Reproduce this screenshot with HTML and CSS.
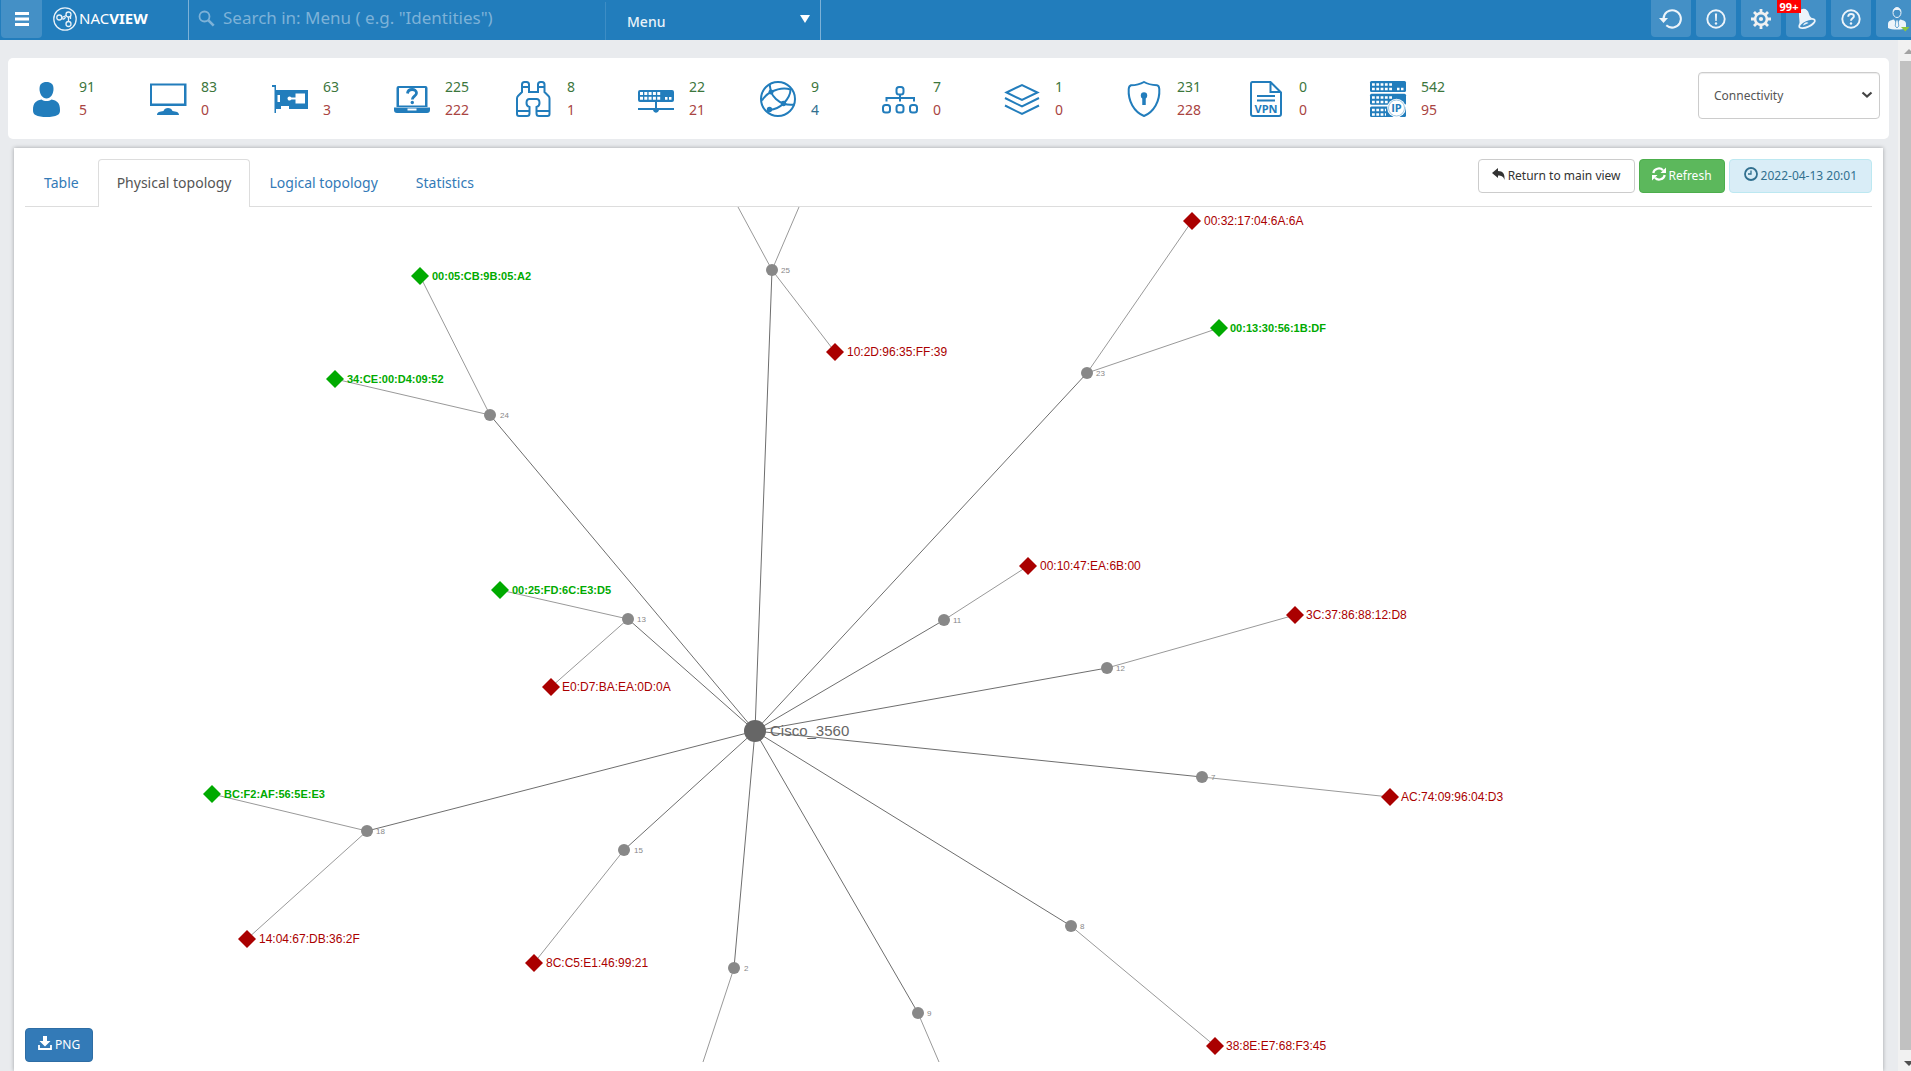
FILE: index.html
```html
<!DOCTYPE html>
<html lang="en">
<head>
<meta charset="utf-8">
<meta name="viewport" content="width=device-width, initial-scale=1">
<title>NACVIEW - Physical topology</title>
<link rel="stylesheet" href="styles.css">
</head>
<body>
<header class="topbar">
  <button class="bar-btn menu-btn" type="button" aria-label="Toggle menu">
    <svg width="14" height="14" viewBox="0 0 14 14"><path d="M0 0h14v3H0zM0 5.500h14v3H0zM0 11h14v3H0z" fill="#fff"/></svg>
  </button>
  <a class="brand" href="#" aria-label="NACVIEW">
    <svg width="24" height="24" viewBox="0 0 24 24" fill="none" stroke="#e8f1f8" stroke-width="1.300"><circle cx="12" cy="12" r="11.200"/><circle cx="6.300" cy="10.500" r="2.500"/><circle cx="15.500" cy="7.500" r="2.500"/><circle cx="15.500" cy="17" r="2.500"/><path d="M8.800 10.500l4.500-2M15.500 10v4.500M9 11.500c1.500 1 2.500.500 3.500-1.500M17.500 9v3"/></svg>
    <span class="brand-name">NAC<b>VIEW</b></span>
  </a>
  <div class="search">
    <label class="search-icon" for="search"><svg width="17" height="17" viewBox="0 0 17 17" fill="none" stroke="#7db2d8"><circle cx="6.500" cy="6.500" r="5" stroke-width="1.800"/><path d="M10.200 10.200l5.500 5.500" stroke-width="2.600"/></svg></label>
    <input id="search" class="search-input" type="text" placeholder='Search in: Menu ( e.g. "Identities")'>
    <div class="scope">
      <select class="scope-select" aria-label="Search scope"><option>Menu</option></select>
      <svg class="scope-arrow" width="10" height="8" viewBox="0 0 10 8"><path d="M0 0h10L5 8z" fill="#fff"/></svg>
    </div>
  </div>
  <nav class="bar-actions">
    <button class="bar-btn" type="button" aria-label="Reload">
      <svg width="24" height="24" viewBox="0 0 24 24"><path d="M4.500 12a8.700 8.700 0 1 1 2.800 6.300" fill="none" stroke="#edf4fa" stroke-width="2"/><path d="M0 11h9l-4.500 5z" fill="#edf4fa"/></svg>
    </button>
    <button class="bar-btn" type="button" aria-label="Alerts">
      <svg width="24" height="24" viewBox="0 0 24 24"><circle cx="12" cy="12" r="8.700" fill="none" stroke="#edf4fa" stroke-width="1.900"/><path d="M10.900 6.500h2.200l-.400 7.500h-1.400z" fill="#edf4fa"/><circle cx="12" cy="16.500" r="1.200" fill="#edf4fa"/></svg>
    </button>
    <button class="bar-btn" type="button" aria-label="Settings">
      <svg width="24" height="24" viewBox="0 0 24 24" fill="none" stroke="#f1f1f1"><circle cx="12" cy="12" r="5.900" stroke-width="2.600"/><circle cx="12" cy="12" r="2.100" fill="#f1f1f1" stroke="none"/><path d="M12 2v4M12 18v4M2 12h4M18 12h4M5 5l2.500 2.500M16.500 16.500L19 19M5 19l2.500-2.500M16.500 7.500L19 5" stroke-width="2.800"/></svg>
    </button>
    <button class="bar-btn" type="button" aria-label="Notifications">
      <svg width="24" height="24" viewBox="0 0 24 24"><path d="M5.500 4C9 0 14 2 15 7c.700 3 3 4.500 6 5.500L5 19.500C6.500 15 4 9 5.500 4z" fill="#edf4fa"/><ellipse cx="13" cy="16.500" rx="8.500" ry="3.400" transform="rotate(-24 13 16.500)" fill="#4490c6" stroke="#edf4fa" stroke-width="1.800"/><path d="M9 18.500c1-3 4-4 5.500-2.500z" fill="#edf4fa"/></svg>
      <span class="badge">99+</span>
    </button>
    <button class="bar-btn" type="button" aria-label="Help">
      <svg width="24" height="24" viewBox="0 0 24 24" fill="none" stroke="#edf4fa"><circle cx="12" cy="12" r="8.700" stroke-width="1.900"/><path d="M9.200 9.800c0-4 5.700-3.500 5.700-.500 0 2-2.900 2.100-2.900 4.500" stroke-width="1.900"/><circle cx="12" cy="16.500" r="1.200" fill="#edf4fa" stroke="none"/></svg>
    </button>
    <button class="bar-btn" type="button" aria-label="Account">
      <svg width="26" height="26" viewBox="0 0 26 26"><ellipse cx="14" cy="6.500" rx="4" ry="5" fill="none" stroke="#edf4fa"/><path d="M10 6c0-6 8-6 8 0l-2-2h-4z" fill="#edf4fa"/><path d="M5 22v-4c0-3 2-3.500 6-4.500l3 5 3-5c4 1 6 1.500 6 4.500v4c-4 2-14 2-18 0z" fill="#edf4fa"/><path d="M13 14h2l.800 6-1.800 2-1.800-2z" fill="#edf4fa" stroke="#4a94c9" stroke-width=".8"/><path d="M18 21h8.500l-4.200 4.500z" fill="#8cc63f"/></svg>
    </button>
  </nav>
</header>

<div class="page">
  <main class="content">
    <section class="stats" aria-label="Summary">
      <ul class="stat-list">
        <li class="stat"><svg class="stat-icon" viewBox="0 0 36 36"><path d="M11.500 8C11.500 3 14 1 18.500 1s7 2 7 7c0 5-3 9.500-7 9.500S11.500 13 11.500 8z"/><path d="M5 29c0-7 3-9.500 8.500-10.500 3 2 7 2 10 0C29 19.500 32 22 32 29c0 2.500-.500 4-2.500 5-5 2.700-17 2.700-22 0C5.500 33 5 31.500 5 29z"/></svg><span class="stat-nums"><span class="up">91</span><span class="down">5</span></span></li>
        <li class="stat"><svg class="stat-icon" viewBox="0 0 36 36"><path fill-rule="evenodd" d="M0 2.500h36.500v22.500H0zM2 4.500v18h32v-18z"/><path d="M7 34c0-3 3-3.500 6.500-4 1-4 8-4 9 0 3.500.500 6.500 1 6.500 4z"/></svg><span class="stat-nums"><span class="up">83</span><span class="down">0</span></span></li>
        <li class="stat"><svg class="stat-icon" viewBox="0 0 36 36"><path d="M0 4h4v28H2.500V6H0z"/><path fill-rule="evenodd" d="M4 9h32v19H17v-3H9v3H4zM5.500 14v7H8v-7zM23.500 12.500v4h-4c-1.500-2-4-1-4 1s2.500 3 4 1h4v4h9.500v-10z"/></svg><span class="stat-nums"><span class="up">63</span><span class="down">3</span></span></li>
        <li class="stat"><svg class="stat-icon" viewBox="0 0 36 36"><path fill-rule="evenodd" d="M4.500 5h27Q33.500 5 33.500 7v19h-31V7Q2.500 5 4.500 5zM5 7v17.500h26V7z"/><path fill-rule="evenodd" d="M0 26.500h36V29q0 3-3 3H3q-3 0-3-3zM13.500 27.500V29.500h9v-2z"/><path d="M13.500 12.500c.500-5.500 9-5 9-.500 0 3-4.200 3.200-4.200 6.500" fill="none" stroke="currentColor" stroke-width="2.800"/><circle cx="18.300" cy="21.500" r="1.700"/></svg><span class="stat-nums"><span class="up">225</span><span class="down">222</span></span></li>
        <li class="stat"><svg class="stat-icon line" viewBox="0 0 36 36"><path d="M6 7V3.500Q6 1 8.500 1h2Q13 1 13 3.500V11h9V3.500Q22 1 24.500 1h1.500Q28.500 1 28.500 3.500V7M6 6v5l-4 4q-1 1-1 2.500V33q0 2 2 2h8q2.500 0 2.500-2.500V26c-2-.500-3-2-3-4 0-2.500 1-4 3-4h7c2 0 3 1.500 3 4 0 2-1 3.500-3 4v6.500Q20.500 35 23 35h8.500q2 0 2-2V17.500q0-1.500-1-2.500l-4-4V6M6 6h7M22 6h6.500M1 30h12.500M20.500 30h13"/></svg><span class="stat-nums"><span class="up">8</span><span class="down">1</span></span></li>
        <li class="stat"><svg class="stat-icon" viewBox="0 0 36 36"><path fill-rule="evenodd" d="M2 9h32q2 0 2 2v8q0 2-2 2H2q-2 0-2-2v-8q0-2 2-2zM2 11v3h3v-3zM6.300 11v3h3v-3zM10.600 11v3h3v-3zM14.900 11v3h3v-3zM19.200 11v3h3v-3zM2 15.700v3h3v-3zM6.300 15.700v3h3v-3zM10.600 15.700v3h3v-3zM14.900 15.700v3h3v-3zM19.200 15.700v3h3v-3zM27 16v2.700h2.500V16zM31 16v2.700h2.500V16z"/><path d="M17 21h2v6h17v2H21c-1 3.500-5 3.500-6 0H0v-2h17z"/></svg><span class="stat-nums"><span class="up">22</span><span class="down">21</span></span></li>
        <li class="stat"><svg class="stat-icon line" viewBox="0 0 36 36"><circle cx="18" cy="18" r="17"/><path d="M11 11c2 5 7 10 12.500 11.500 4-4 7-9 7-14C25 6.500 17 8 11 11zM11 11L9.500 3M11 11c-4 2-7 5-9 8.500M23.500 22.500c-3 3-9 6-14 6.500M23.500 22.500c4 1.500 7 1.500 11 1"/><circle class="dot" cx="11" cy="11" r="2.500"/><circle class="dot" cx="23.500" cy="22.500" r="2.700"/><circle class="dot" cx="9.500" cy="28.500" r="2.700"/></svg><span class="stat-nums"><span class="up">9</span><span class="info">4</span></span></li>
        <li class="stat"><svg class="stat-icon line" viewBox="0 0 36 36"><rect x="14.500" y="6" width="7" height="7.500" rx="2.500"/><path d="M18 13.500v7M4.500 20.500V17h27.500v3.500"/><rect x="1" y="24" width="7" height="7.500" rx="2.500"/><rect x="14.500" y="24" width="7" height="7.500" rx="2.500"/><rect x="28" y="24" width="7" height="7.500" rx="2.500"/></svg><span class="stat-nums"><span class="up">7</span><span class="down">0</span></span></li>
        <li class="stat"><svg class="stat-icon line" viewBox="0 0 36 36"><path d="M2.500 11.500L18 4l15.500 7.500L18 19zM1 17l17 8.500L35 17M1 24.500l17 8.500 17-8.500"/></svg><span class="stat-nums"><span class="up">1</span><span class="down">0</span></span></li>
        <li class="stat"><svg class="stat-icon line" viewBox="0 0 36 36"><path d="M18 1c-3.500 2-8 3.200-13 3.300Q3 5 2.700 8C2 20 8 31 18 35 28 31 34 20 33.300 8 33 5 32.500 4.500 31 4.300 26 4 21.500 3 18 1z"/><circle class="dot" cx="18" cy="14.500" r="3.200"/><path d="M18 15v9" stroke-width="3.500"/></svg><span class="stat-nums"><span class="up">231</span><span class="down">228</span></span></li>
        <li class="stat"><svg class="stat-icon line" viewBox="0 0 36 36"><path d="M4.500 1h18L33 11.500V33q0 2-2 2H5q-2 0-2-2V3q0-2 1.500-2zM22.500 1v10H33M9 15h18M9 19.500h18"/><text class="icon-text" x="18" y="32" text-anchor="middle">VPN</text></svg><span class="stat-nums"><span class="up">0</span><span class="down">0</span></span></li>
        <li class="stat"><svg class="stat-icon" viewBox="0 0 36 36"><rect width="36" height="11" rx="1.500"/><rect y="12.800" width="36" height="11" rx="1.500"/><rect y="25.500" width="36" height="10.500" rx="1.500"/><path d="M2 3.500h20.500M2 8h20.500M2 16.500h20.500M2 21h16M2 29h14M2 33.500h14" stroke="#fff" stroke-width="2.600" stroke-dasharray="2.800 1.500"/><path d="M27 8h2.500M31 8h2.500" stroke="#fff" stroke-width="2.500"/><circle cx="26.500" cy="27" r="9.300" fill="#fff"/><circle cx="26.500" cy="27" r="8" fill="#fff" stroke="#9cc6e2"/><text class="icon-text" x="26.500" y="31" text-anchor="middle">IP</text></svg><span class="stat-nums"><span class="up">542</span><span class="down">95</span></span></li>
      </ul>
      <div class="view-picker">
        <select class="view-select" aria-label="View"><option>Connectivity</option></select>
        <svg class="view-arrow" width="12" height="8" viewBox="0 0 12 8"><path d="M1.500 1.500L6 5.500l4.500-4" fill="none" stroke="#444" stroke-width="2.200"/></svg>
      </div>
    </section>

    <section class="panel">
      <div class="panel-head">
        <nav class="tabs">
          <a class="tab" href="#">Table</a>
          <a class="tab active" href="#" aria-current="page">Physical topology</a>
          <a class="tab" href="#">Logical topology</a>
          <a class="tab" href="#">Statistics</a>
        </nav>
        <div class="tools">
          <button class="btn btn-default" type="button"><svg width="13" height="13" viewBox="0 0 13 13"><path d="M0 5l6-5v3c5 0 7 3 6.500 9-1-3.500-3-4.500-6.500-4.500V10z" fill="#333"/></svg>Return to main view</button>
          <button class="btn btn-success" type="button"><svg width="14" height="14" viewBox="0 0 14 14" fill="none" stroke="#fff" stroke-width="2.200"><path d="M1.300 6C2 1.500 8 0 11 3.300M12.700 8C12 12.500 6 14 3 10.700"/><path d="M14 .5V6H8.500zM0 13.500V8h5.500z" fill="#fff" stroke="none"/></svg>Refresh</button>
          <span class="btn stamp"><svg width="14" height="14" viewBox="0 0 14 14" fill="none" stroke="#31708f"><circle cx="7" cy="7" r="6" stroke-width="1.800"/><path d="M7 3.500V7H4" stroke-width="1.300"/></svg>2022-04-13 20:01</span>
        </div>
      </div>
      <div class="graph-area">
        <svg class="graph" role="img" aria-label="Physical topology">
          <defs><path id="host" d="M0-9L9 0 0 9-9 0z"/></defs>
          <g class="links">
            <path d="M747 63L713 0M747 63L774 0M747 63L810 145M465 208L395 69M465 208L310 172M603 412L475 383M603 412L526 480M1062 166L1167 14M1062 166L1194 121M919 413L1003 359M1082 461L1270 408M1177 570L1365 590M1046 719L1190 839M893 806L914 855M709 761L678 855M599 643L509 756M342 624L187 587M342 624L222 732"/>
          </g>
          <g class="trunks">
            <path d="M730 524L747 63M730 524L465 208M730 524L603 412M730 524L1062 166M730 524L919 413M730 524L1082 461M730 524L1177 570M730 524L1046 719M730 524L893 806M730 524L709 761M730 524L599 643M730 524L342 624"/>
          </g>
          <g class="port">
            <circle cx="747" cy="63" r="6"/><text x="756" y="66">25</text>
            <circle cx="465" cy="208" r="6"/><text x="475" y="211">24</text>
            <circle cx="603" cy="412" r="6"/><text x="612" y="415">13</text>
            <circle cx="1062" cy="166" r="6"/><text x="1071" y="169">23</text>
            <circle cx="919" cy="413" r="6"/><text x="928" y="416">11</text>
            <circle cx="1082" cy="461" r="6"/><text x="1091" y="464">12</text>
            <circle cx="1177" cy="570" r="6"/><text x="1186" y="573">7</text>
            <circle cx="1046" cy="719" r="6"/><text x="1055" y="722">8</text>
            <circle cx="893" cy="806" r="6"/><text x="902" y="809">9</text>
            <circle cx="709" cy="761" r="6"/><text x="719" y="764">2</text>
            <circle cx="599" cy="643" r="6"/><text x="609" y="646">15</text>
            <circle cx="342" cy="624" r="6"/><text x="351" y="627">18</text>
          </g>
          <g class="switch"><circle cx="730" cy="524" r="11"/><text x="745" y="529">Cisco_3560</text></g>
          <g class="online">
            <use href="#host" x="395" y="69"/><text x="407" y="73">00:05:CB:9B:05:A2</text>
            <use href="#host" x="310" y="172"/><text x="322" y="176">34:CE:00:D4:09:52</text>
            <use href="#host" x="475" y="383"/><text x="487" y="387">00:25:FD:6C:E3:D5</text>
            <use href="#host" x="187" y="587"/><text x="199" y="591">BC:F2:AF:56:5E:E3</text>
            <use href="#host" x="1194" y="121"/><text x="1205" y="125">00:13:30:56:1B:DF</text>
          </g>
          <g class="offline">
            <use href="#host" x="526" y="480"/><text x="537" y="484">E0:D7:BA:EA:0D:0A</text>
            <use href="#host" x="810" y="145"/><text x="822" y="149">10:2D:96:35:FF:39</text>
            <use href="#host" x="1167" y="14"/><text x="1179" y="18">00:32:17:04:6A:6A</text>
            <use href="#host" x="1003" y="359"/><text x="1015" y="363">00:10:47:EA:6B:00</text>
            <use href="#host" x="1270" y="408"/><text x="1281" y="412">3C:37:86:88:12:D8</text>
            <use href="#host" x="1365" y="590"/><text x="1376" y="594">AC:74:09:96:04:D3</text>
            <use href="#host" x="1190" y="839"/><text x="1201" y="843">38:8E:E7:68:F3:45</text>
            <use href="#host" x="509" y="756"/><text x="521" y="760">8C:C5:E1:46:99:21</text>
            <use href="#host" x="222" y="732"/><text x="234" y="736">14:04:67:DB:36:2F</text>
          </g>
        </svg>
        <button class="btn btn-primary export" type="button"><svg width="14" height="14" viewBox="0 0 14 14"><path d="M5 0h4v5h3.500L7 10.500 1.500 5H5z" fill="#fff"/><path d="M1 9v4h12V9" fill="none" stroke="#fff" stroke-width="1.800"/></svg>PNG</button>
      </div>
    </section>
  </main>
  <div class="scroller" aria-hidden="true">
    <svg class="scroll-end" viewBox="0 0 13 21"><path d="M6 14l5-5 5 5z" fill="#a3a3a3"/></svg>
    <div class="scroll-thumb"></div>
    <svg class="scroll-end" viewBox="0 0 13 21"><path d="M6 11h10l-5 5z" fill="#505050"/></svg>
  </div>
</div>
</body>
</html>
```
FILE: styles.css
```css
* { box-sizing: border-box; }

body {
  margin: 0;
  min-height: 100vh;
  display: flex;
  flex-direction: column;
  overflow-x: hidden;
  background: #e9ebee;
  color: #333;
  font: 14px/20px "Noto Sans", "Open Sans", sans-serif;
}

button, input, select { font: inherit; }
a { text-decoration: none; }
svg { display: block; flex: none; }

/* Top bar */
.topbar {
  display: flex;
  height: 40px;
  background: #227dbc;
  padding-left: 1px;
  overflow: hidden;
}
.bar-btn {
  position: relative;
  flex: none;
  display: flex;
  align-items: center;
  justify-content: center;
  width: 40px;
  height: 37px;
  padding: 0;
  border: 0;
  border-radius: 0 0 4px 4px;
  background: #4490c6;
}
.menu-btn { width: 41px; height: 38px; }
.brand {
  display: flex;
  align-items: center;
  gap: 2px;
  width: 146px;
  height: 37px;
  padding-left: 11px;
  color: #fff;
  font-size: 15px;
}
.brand-name { padding-bottom: 2px; }
.search {
  display: flex;
  width: 633px;
  border: solid #7db1d7;
  border-width: 0 1px;
}
.search-icon { padding: 10px 0 0 9px; width: 34px; }
.search-input {
  flex: 1;
  min-width: 0;
  height: 35px;
  padding: 0;
  border: 0;
  outline: 0;
  background: none;
  color: #fff;
  font-size: 17px;
}
.search-input::placeholder { color: #7db2d8; opacity: 1; }
.scope {
  position: relative;
  width: 215px;
  margin-top: 2px;
  border-left: 1px solid #3d8dc5;
}
.scope-select {
  width: 100%;
  height: 38px;
  padding: 2px 21px 0;
  border: 0;
  appearance: none;
  background: none;
  color: #e9f2f9;
  font-weight: 500;
}
.scope-arrow { position: absolute; right: 10px; top: 13px; pointer-events: none; }
.bar-actions { display: flex; gap: 5px; margin-left: auto; margin-right: -5px; }
.badge {
  position: absolute;
  left: -9px;
  top: 0;
  width: 24px;
  background: #f00;
  color: #fff;
  font: bold 11px/13px "Noto Sans", sans-serif;
}

/* Page */
.page { flex: 1; display: flex; }
.content {
  flex: 1;
  min-width: 0;
  display: flex;
  flex-direction: column;
  gap: 9px;
  padding: 18px 9px 0 8px;
}
.scroller {
  flex: none;
  width: 13px;
  display: flex;
  flex-direction: column;
  background: #f1f1f1;
}
.scroll-end { width: 13px; height: 21px; }
.scroll-thumb { flex: 1; margin-left: 2px; background: #c1c1c1; }

/* Summary card */
.stats {
  display: flex;
  align-items: center;
  justify-content: space-between;
  min-height: 81px;
  padding: 0 9px 0 20px;
  border-radius: 5px;
  background: #fff;
}
.stat-list { display: flex; margin: 0; padding: 0; list-style: none; }
.stat { display: flex; align-items: center; gap: 15px; width: 122px; }
.stat-icon { width: 36px; height: 36px; color: #227dbc; fill: currentColor; overflow: visible; }
.stat-icon.line { fill: none; stroke: currentColor; stroke-width: 2; }
.stat-icon .dot { fill: currentColor; stroke: none; }
.icon-text { font: bold 11px "Open Sans", sans-serif; fill: #227dbc; stroke: none; }
.stat-nums { display: flex; flex-direction: column; line-height: 23px; padding-bottom: 2px; }
.up { color: #3c763d; }
.down { color: #a94442; }
.info { color: #31708f; }
.view-picker { position: relative; width: 182px; margin-bottom: 6px; }
.view-select {
  width: 100%;
  height: 47px;
  padding: 0 15px;
  border: 1px solid #ccc;
  border-radius: 4px;
  appearance: none;
  background: #fff;
  box-shadow: inset 0 1px 1px #00000013;
  color: #555;
  font-size: 12px;
}
.view-arrow { position: absolute; right: 7px; top: 19px; pointer-events: none; }

/* Panel */
.panel {
  flex: 1;
  display: flex;
  flex-direction: column;
  margin: 0 6px;
  padding: 11px 11px 9px;
  background: #fff;
  box-shadow: 0 0 4px #00000050;
}
.panel-head {
  display: flex;
  justify-content: space-between;
  align-items: flex-start;
  border-bottom: 1px solid #ddd;
}
.tabs { display: flex; margin-bottom: -1px; }
.tab {
  padding: 13px 18px 14px;
  border: 1px solid transparent;
  border-bottom: 0;
  border-radius: 4px 4px 0 0;
  color: #337ab7;
}
.tab.active { border-color: #ddd; background: #fff; color: #555; }
.tools { display: flex; gap: 4px; }
.btn {
  display: inline-flex;
  align-items: center;
  gap: 3px;
  height: 34px;
  padding: 0 12px;
  border: 1px solid #ccc;
  border-radius: 4px;
  font-size: 12px;
  white-space: nowrap;
}
.btn svg { margin-bottom: 4px; }
.btn-default { padding: 0 13px; background: #fff; color: #333; }
.btn-success { background: #5cb85c; border-color: #4cae4c; color: #fff; }
.btn-primary { background: #337ab7; border-color: #2e6da4; color: #fff; }
.stamp { padding: 0 14px; background: #d9edf7; border-color: #bce8f1; color: #31708f; }

/* Topology graph */
.graph-area { position: relative; flex: 1; display: flex; min-height: 855px; }
.graph { flex: 1; width: 100%; overflow: hidden; font-family: "Liberation Sans", Arial, sans-serif; }
.links { stroke: #999; fill: none; }
.trunks { stroke: #6e6e6e; fill: none; }
.port { fill: #888; font-size: 8px; }
.switch { fill: #666; font-size: 15px; }
.online { fill: #0a0; font-size: 11px; font-weight: bold; }
.offline { fill: #a00; font-size: 12px; }
.export { position: absolute; left: 0; bottom: 0; }
```
